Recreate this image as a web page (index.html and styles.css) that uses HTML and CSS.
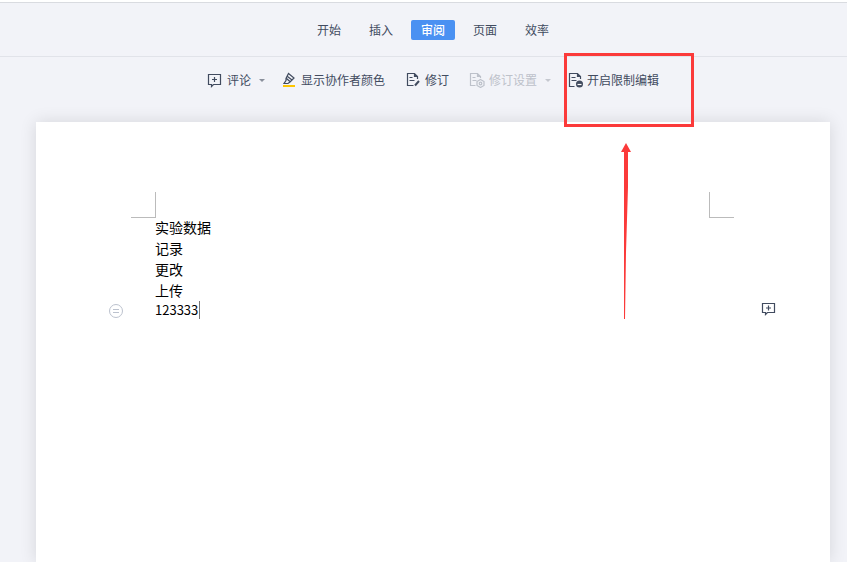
FILE: index.html
```html
<!DOCTYPE html>
<html lang="zh-CN">
<head>
<meta charset="utf-8">
<title>实验数据</title>
<link rel="stylesheet" href="styles.css">
</head>
<body>
<header class="header">
  <nav class="tabs">
    <button class="tab" type="button">开始</button>
    <button class="tab" type="button">插入</button>
    <button class="tab active" type="button">审阅</button>
    <button class="tab" type="button">页面</button>
    <button class="tab" type="button">效率</button>
  </nav>
</header>
<div class="toolbar">
  <button class="tool" type="button">
    <svg class="icon" viewBox="0 0 16 16"><path d="M1.500 2.500h12v10h-7l-2 2v-2h-3zM7.500 5v5M5 7.500h5"/></svg>
    评论
    <svg class="caret" viewBox="0 0 10 16"><path d="M4 7h6l-3 3z"/></svg>
  </button>
  <button class="tool plain" type="button">
    <svg class="icon" viewBox="0 0 16 16"><path class="marker" d="M2 13h12v2H2z"/><path d="M4 11.500h3l2-1.500 4-4L7.500 1.500 5 6.500v2L3 11.500zM5.500 6.500l4 3.500M6.500 4.500l4.500 3.500"/></svg>
    显示协作者颜色
  </button>
  <button class="tool plain" type="button">
    <svg class="icon" viewBox="0 0 16 16"><path d="M12.500 7V4.500l-3-3h-7v12h6M9.500 1.500v3h3M4.500 5.500h3M4.500 8.500h5"/><path class="pen" d="M10 13.500l4-4.500"/></svg>
    修订
  </button>
  <button class="tool" type="button" disabled>
    <svg class="icon" viewBox="0 0 16 16"><path d="M11.500 6V4.500l-3-3h-7v12h5M8.500 1.500v3h3M3.500 5.500h3M3.500 8.500h4M11.500 7.500l3.500 2v4l-3.500 2-3.500-2v-4z"/><circle cx="11.500" cy="11.500" r="1.300"/></svg>
    修订设置
    <svg class="caret" viewBox="0 0 10 16"><path d="M4 7h6l-3 3z"/></svg>
  </button>
  <button class="tool" type="button">
    <svg class="icon" viewBox="0 0 16 16"><path d="M13.500 7V4.500l-3-3h-8v13h5M10.500 1.500v3h3M4.500 5.500h4M4.500 8.500h5"/><circle class="solid" cx="12.500" cy="12" r="3.500"/><path class="minus" d="M10.500 12.500h4"/></svg>
    开启限制编辑
  </button>
</div>
<main class="workspace">
  <article class="page">
    <div class="corners"><span class="corner left"></span><span class="corner right"></span></div>
    <div class="text">
      <p>实验数据</p>
      <p>记录</p>
      <p>更改</p>
      <p>上传</p>
      <p class="current">
        <button class="handle" type="button" aria-label="段落"><svg viewBox="0 0 16 16"><circle cx="8" cy="8" r="6.500"/><path d="M5 6.500h6M5 9.500h6"/></svg></button>
        <span class="number">123333</span>
        <button class="comment" type="button" aria-label="添加评论"><svg viewBox="0 0 16 16"><path d="M1.500 2.500h12v9h-7l-2 2v-2h-3zM7.500 4.500v5M5 7h5"/></svg></button>
      </p>
    </div>
    <div class="highlight"></div>
    <svg class="arrow" viewBox="0 0 12 178"><path d="M6 1l5 9H8v35L6 110 5 177H4L4 45V10H1z"/></svg>
  </article>
</main>
</body>
</html>
```
FILE: styles.css
```css
* { box-sizing: border-box; }

body {
  margin: 0;
  padding-top: 2px;
  min-height: 100vh;
  display: flex;
  flex-direction: column;
  background: linear-gradient(#fff 2px, #f2f3f8 2px);
  color: #414b5f;
  font: 12px/20px "Noto Sans CJK SC", sans-serif;
}

button {
  padding: 0;
  border: 0;
  background: none;
  color: inherit;
  font: inherit;
}

svg { display: block; }

.header {
  padding: 17px 0 16px 19px;
  border-top: 1px solid #d9dbe0;
  border-bottom: 1px solid #e1e3e9;
}

.tabs {
  display: flex;
  justify-content: center;
  gap: 8px;
}

.tab {
  height: 20px;
  padding: 0 10px;
  border-radius: 2px;
}

.tab.active {
  background: #4a91f2;
  color: #fff;
  font-weight: 500;
}

.toolbar {
  display: flex;
  justify-content: center;
  gap: 16px;
  padding: 13px 0 12px 19px;
}

.tool {
  display: flex;
  align-items: center;
  gap: 4px;
  white-space: nowrap;
}

.tool.plain { padding-right: 4px; }
.tool:disabled { color: #bdc1ca; }

.icon,
.handle svg,
.comment svg {
  width: 16px;
  height: 16px;
  fill: none;
  stroke: currentColor;
}

.icon,
.comment svg { stroke-width: 1.2; }

.caret {
  width: 10px;
  height: 16px;
  fill: #8a909c;
}

.tool:disabled .caret { fill: #c5c8cf; }
.icon .marker { fill: #fdc500; stroke: none; }
.icon .pen { stroke-width: 2; }
.icon .solid { fill: currentColor; stroke: none; }
.icon .minus { stroke: #fff; }

.workspace {
  flex: 1;
  display: flex;
  justify-content: center;
  padding: 20px 17px 0 36px;
}

.page {
  position: relative;
  flex: 0 1 794px;
  padding: 70px 96px 0 95px;
  background: #fff;
  box-shadow: 0 0 16px rgba(0, 0, 0, 0.12);
}

.corners {
  display: flex;
  justify-content: space-between;
}

.corner {
  width: 25px;
  height: 26px;
  border-bottom: 1px solid #bbb;
}

.corner.left { border-right: 1px solid #bbb; }
.corner.right { border-left: 1px solid #bbb; }

.text {
  margin-top: -1px;
  padding: 0 24px;
  color: #000;
  font-size: 14px;
  line-height: 21px;
}

.text p { margin: 0; }

.current {
  position: relative;
  display: flex;
  align-items: flex-end;
}

.number {
  padding-right: 1px;
  border-right: 1px solid #777;
  font-size: 13px;
  line-height: 18px;
}

.handle,
.comment {
  position: absolute;
  top: 2px;
}

.handle { left: -47px; color: #bcc2ce; }
.comment { right: -67px; top: 0; color: #414b5f; }

.highlight {
  position: absolute;
  top: -69px;
  right: 136px;
  width: 130px;
  height: 74px;
  border: 3px solid #fb3a3a;
}

.arrow {
  position: absolute;
  top: 20px;
  right: 198px;
  width: 12px;
  height: 178px;
  fill: #fb3a3a;
}
```
